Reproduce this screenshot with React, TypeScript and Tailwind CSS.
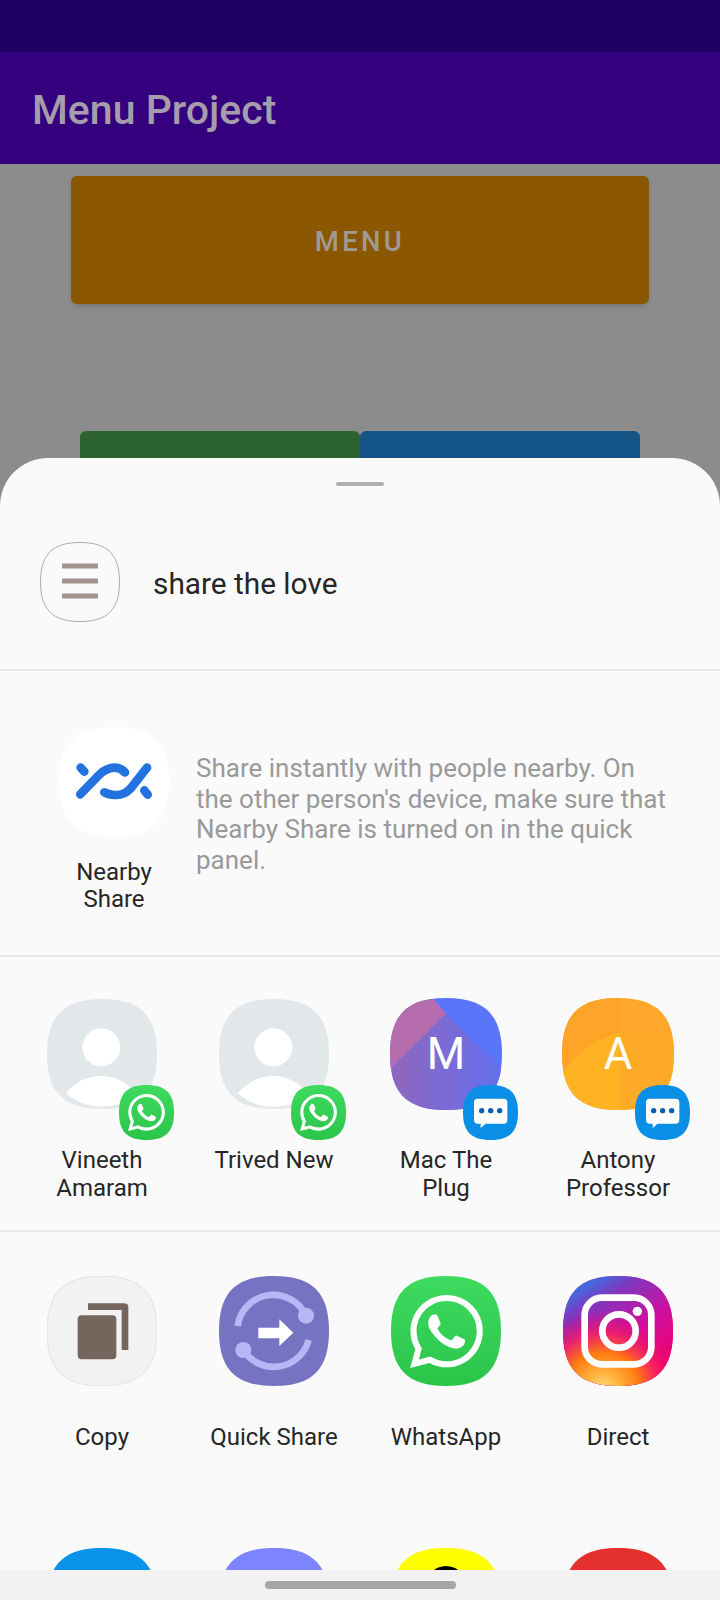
import { useId, type ReactNode } from "react";
import { SiWhatsapp } from "react-icons/si";

// all icon drawings use a 330 unit box (3x the 110px icon)
const SQUIRCLE = "M165 0C280 0 330 50 330 165C330 280 280 330 165 330C50 330 0 280 0 165C0 50 50 0 165 0Z";

function Squircle({ fill, stroke, size = 110, children }: { fill: string; stroke?: string; size?: number; children?: ReactNode }) {
	const id = useId();
	return (
		<svg viewBox="0 0 330 330" width={size} height={size} className="block shrink-0">
			<defs>
				<clipPath id={id}>
					<path d={SQUIRCLE} />
				</clipPath>
			</defs>
			<path d={SQUIRCLE} fill={fill} stroke={stroke} strokeWidth={stroke ? 4 : 0} />
			<g clipPath={`url(#${id})`}>{children}</g>
		</svg>
	);
}

function WhatsAppIcon({ size = 110, logo = 73 }: { size?: number; logo?: number }) {
	const id = useId();
	return (
		<div className="relative shrink-0" style={{ width: size, height: size }}>
			<svg viewBox="0 0 330 330" width={size} height={size} className="block">
				<defs>
					<linearGradient id={id} x1="0" y1="0" x2="0" y2="1">
						<stop offset="0" stopColor="#3edb60" />
						<stop offset="1" stopColor="#2ac449" />
					</linearGradient>
				</defs>
				<path d={SQUIRCLE} fill={`url(#${id})`} />
			</svg>
			<div className="absolute inset-0 flex items-center justify-center text-white">
				<SiWhatsapp size={logo} />
			</div>
		</div>
	);
}

function MessageBadge() {
	return (
		<Squircle fill="#0a8fe6" size={55}>
			<path d="M88 82H244Q266 82 266 104V210Q266 232 244 232H136L106 258V232H88Q66 232 66 210V104Q66 82 88 82Z" fill="#fff" />
			<circle cx="112" cy="154" r="16" fill="#0b5fb0" />
			<circle cx="166" cy="154" r="16" fill="#0b5fb0" />
			<circle cx="220" cy="154" r="16" fill="#0b5fb0" />
		</Squircle>
	);
}

function PersonAvatar() {
	return (
		<Squircle fill="#e2e7ea">
			<circle cx="163" cy="145" r="57" fill="#fff" />
			<path d="M56 283Q100 231 163 231Q226 231 276 291Q230 322 163 323Q100 322 56 283Z" fill="#fff" />
		</Squircle>
	);
}

function MacAvatar() {
	const id = useId();
	return (
		<Squircle fill="#5a74fa" size={112}>
			<defs>
				<linearGradient id={id} x1="0" y1="0" x2="1" y2="0">
					<stop offset="0" stopColor="#9066bd" />
					<stop offset="1" stopColor="#6470ee" />
				</linearGradient>
			</defs>
			<path d="M0 0H125L165 46L5 206L0 210Z" fill="#b66dae" />
			<path d="M165 46L5 206V330H330V211Z" fill={`url(#${id})`} />
		</Squircle>
	);
}

function AntonyAvatar() {
	return (
		<Squircle fill="#ffa82b" size={112}>
			<path d="M0 0H172V100Q60 130 0 225Z" fill="#ffa429" />
			<path d="M0 225Q60 130 172 100V330H0Z" fill="#ffb222" />
			<path d="M172 100Q260 90 330 130V330H172Z" fill="#ffab28" />
		</Squircle>
	);
}

function Letter({ children }: { children: string }) {
	return (
		<div className="absolute inset-0 flex items-center justify-center text-[44px] leading-none text-white font-['Roboto',sans-serif]">
			{children}
		</div>
	);
}

function NearbyIcon() {
	return (
		<Squircle fill="#ffffff">
			<g transform="translate(-28 -38)" fill="none" stroke="#2273e0" strokeWidth="26" strokeLinecap="round">
				<path d="M93 160L104 172" />
				<path d="M92 240L150 180Q172 160 195 160Q212 160 226 174" />
				<path d="M164 234Q180 243 200 242Q225 242 243 222L292 160" />
				<path d="M284 228L294 241" />
			</g>
		</Squircle>
	);
}

function CopyIcon() {
	return (
		<Squircle fill="#f2f2f2" stroke="#e6e6e6">
			<g transform="translate(-140 -78)" fill="#74665c">
				<rect x="232" y="196" width="116" height="132" rx="12" />
				<path d="M263 160H372Q384 160 384 172V300H364V180H263Z" />
			</g>
		</Squircle>
	);
}

function QuickShareIcon() {
	return (
		<Squircle fill="#7674c2">
			<g transform="translate(-657 -78)">
				<path d="M713 228A108 108 0 0 1 918 197" fill="none" stroke="#b9b6f5" strokeWidth="20" />
				<path d="M926 270A108 108 0 0 1 730 300" fill="none" stroke="#b9b6f5" strokeWidth="20" />
				<circle cx="918" cy="197" r="24" fill="#b9b6f5" />
				<circle cx="730" cy="300" r="24" fill="#b9b6f5" />
				<path d="M775 233H838V208L880 248L838 288V265H775Z" fill="#fff" />
			</g>
		</Squircle>
	);
}

function InstagramIcon() {
	const base = useId();
	const glow = useId();
	return (
		<Squircle fill="#d6008f">
			<defs>
				<linearGradient id={base} x1="0.3" y1="0" x2="0.8" y2="0.85">
					<stop offset="0" stopColor="#3a6fe2" />
					<stop offset="0.22" stopColor="#8236bd" />
					<stop offset="0.58" stopColor="#cc0fa0" />
					<stop offset="1" stopColor="#f00070" />
				</linearGradient>
				<radialGradient id={glow} cx="0.36" cy="1.04" r="0.72">
					<stop offset="0" stopColor="#ffe08a" />
					<stop offset="0.22" stopColor="#ffb43c" />
					<stop offset="0.48" stopColor="#ff7a10" />
					<stop offset="0.72" stopColor="#f8245e" stopOpacity="0.8" />
					<stop offset="1" stopColor="#f00070" stopOpacity="0" />
				</radialGradient>
			</defs>
			<rect width="330" height="330" fill={`url(#${base})`} />
			<rect width="330" height="330" fill={`url(#${glow})`} />
			<g transform="translate(-610 -80)" fill="none" stroke="#fff" strokeWidth="20">
				<rect x="675" y="145" width="200" height="200" rx="52" />
				<circle cx="778" cy="245" r="50" />
				<circle cx="833" cy="186" r="14" fill="#fff" stroke="none" />
			</g>
		</Squircle>
	);
}

function Cell({ icon, badge }: { icon: ReactNode; badge?: ReactNode }) {
	return (
		<div className="flex flex-col items-center">
			<div className="relative w-[110px] h-[110px]">
				{icon}
				{badge && <div className="absolute left-[72px] top-[86px]">{badge}</div>}
			</div>
		</div>
	);
}

function Label({ children }: { children: string }) {
	return <p className="w-[132px] text-center text-[24px] leading-[28px] text-[#262626]">{children}</p>;
}

const CONTACTS = [
	{ label: "Vineeth Amaram", icon: <PersonAvatar />, badge: <WhatsAppIcon size={55} logo={37} /> },
	{ label: "Trived New", icon: <PersonAvatar />, badge: <WhatsAppIcon size={55} logo={37} /> },
	{
		label: "Mac The Plug",
		icon: (
			<>
				<div className="-m-px">
					<MacAvatar />
				</div>
				<Letter>M</Letter>
			</>
		),
		badge: <MessageBadge />,
	},
	{
		label: "Antony Professor",
		icon: (
			<>
				<div className="-m-px">
					<AntonyAvatar />
				</div>
				<Letter>A</Letter>
			</>
		),
		badge: <MessageBadge />,
	},
];

const APPS = [
	{ label: "Copy", icon: <CopyIcon /> },
	{ label: "Quick Share", icon: <QuickShareIcon /> },
	{ label: "WhatsApp", icon: <WhatsAppIcon /> },
	{ label: "Direct", icon: <InstagramIcon /> },
];

export default function App() {
	return (
		<div className="relative h-[1600px] w-[720px] overflow-hidden bg-[#8c8c8c] font-['Roboto',sans-serif]">
			{/* Dimmed activity behind the sheet */}
			<div className="h-[52px] bg-[#1f0062]" />
			<div className="flex h-[112px] items-center bg-[#34007e] pl-[32px] pt-1">
				<span className="text-[41px] font-medium leading-none text-[#a59dab]">Menu Project</span>
			</div>
			<div className="mx-[71px] mt-3 flex h-[128px] items-center justify-center rounded-md bg-[#8b5700] pt-1 shadow-md">
				<span className="text-[27.5px] font-medium tracking-[3.3px] text-[#a09a94]">MENU</span>
			</div>
			<div className="mx-[80px] mt-[127px] flex">
				<div className="h-[60px] w-[280px] rounded-md bg-[#2c632e]" />
				<div className="h-[60px] w-[280px] rounded-md bg-[#155486]" />
			</div>

			{/* Share sheet */}
			<div className="absolute inset-x-0 bottom-0 top-[458px] flex flex-col overflow-hidden rounded-t-[48px] bg-[#fafafa]">
				<div className="flex-1 overflow-hidden">
					<div className="flex h-[211px] flex-col">
						<div className="mx-auto mt-6 h-1 w-12 rounded-full bg-[#b0b0b0]" />
						<div className="mt-[56px] flex items-center pl-[40px]">
							<div className="flex h-[80px] w-[80px] items-center justify-center">
								<svg viewBox="0 0 330 330" width="80" height="80">
									<path d={SQUIRCLE} fill="none" stroke="#a8a8a8" strokeWidth="4" transform="translate(2 2) scale(0.988)" />
									<path d="M91 99H239M91 161H239M91 223H239" stroke="#a2948c" strokeWidth="21" />
								</svg>
							</div>
							<span className="ml-[33px] pt-1 text-[29.8px] leading-none text-[#262626]">share the love</span>
						</div>
					</div>
					<div className="h-[2px] bg-[#e8e8e8]" />

					<div className="flex h-[284px] pl-[44px] pt-[56px]">
						<div className="flex w-[140px] shrink-0 flex-col items-center">
							<NearbyIcon />
							<p className="mt-[22px] w-[100px] text-center text-[24px] leading-[27px] text-[#262626]">Nearby Share</p>
						</div>
						<p className="ml-3 mt-[26px] h-fit w-[476px] text-[26px] leading-[30.7px] text-[#999999]">
							Share instantly with people nearby. On the other person's device, make sure that Nearby Share is turned on in the quick panel.
						</p>
					</div>
					<div className="h-[2px] bg-[#e8e8e8]" />

					<div className="grid h-[273px] grid-cols-4 px-4 pt-[42px]">
						{CONTACTS.map((c) => (
							<div key={c.label} className="flex flex-col items-center">
								<Cell icon={c.icon} badge={c.badge} />
								<div className="mt-[37px]">
									<Label>{c.label}</Label>
								</div>
							</div>
						))}
					</div>
					<div className="h-[2px] bg-[#e8e8e8]" />

					<div className="grid h-[316px] grid-cols-4 px-4 pt-[44px]">
						{APPS.map((a) => (
							<div key={a.label} className="flex flex-col items-center">
								<Cell icon={a.icon} />
								<div className="mt-[37px]">
									<Label>{a.label}</Label>
								</div>
							</div>
						))}
					</div>

					<div className="grid grid-cols-4 px-4">
						<div className="flex justify-center">
							<Squircle fill="#0a93e8" />
						</div>
						<div className="flex justify-center">
							<Squircle fill="#7d84ff" />
						</div>
						<div className="flex justify-center">
							<Squircle fill="#ffff00">
								<circle cx="165" cy="114" r="60" fill="#000" />
							</Squircle>
						</div>
						<div className="flex justify-center">
							<Squircle fill="#e53030" />
						</div>
					</div>
				</div>
				<div className="flex h-[30px] shrink-0 items-start justify-center bg-[#f2f2f2] pt-[11px]">
					<div className="h-2 w-[191px] rounded-full bg-[#a6a6a6]" />
				</div>
			</div>
		</div>
	);
}
